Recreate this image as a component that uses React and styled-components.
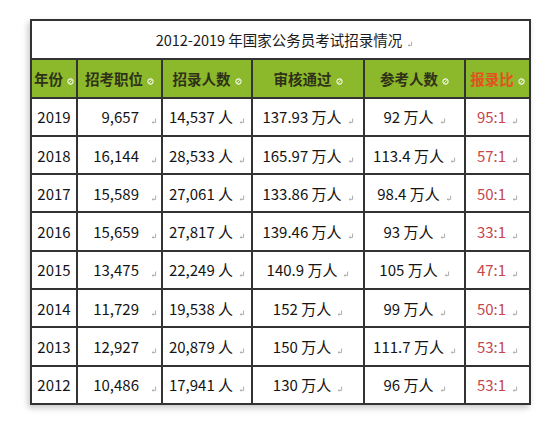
import React from "react";
import styled, { createGlobalStyle } from "styled-components";

const GlobalStyle = createGlobalStyle`
  html, body {
    margin: 0;
    padding: 0;
    background: #ffffff;
  }
  body {
    font-family: "Noto Sans CJK SC", "Noto Sans", sans-serif;
  }
`;

const Page = styled.div`
  width: 550px;
  height: 423px;
  padding: 19px 0 0 30px;
  box-sizing: border-box;
`;

const Table = styled.table`
  width: 499px;
  height: 386px;
  table-layout: fixed;
  border-collapse: collapse;
  background: #fff;
  box-shadow: -2px 3px 6px rgba(0, 0, 0, 0.22);
  font-size: 15px;
  color: #141414;
`;

const TitleCell = styled.td`
  height: 37px;
  border: 2px solid #333;
  text-align: center;
  font-size: 14.5px;
  color: #1a1a1a;
  padding: 0 0 0 8px;
`;

const HeadRow = styled.tr`
  background: #8cb82b;
`;

const HeadCell = styled.th`
  height: 36px;
  border: 2px solid #333;
  padding: 0;
  font-size: 14.5px;
  font-weight: 700;
  color: ${(p) => (p.$hot ? "#e4501e" : "#2f3118")};
  text-align: center;
  white-space: nowrap;
`;

const Cell = styled.td`
  height: 36px;
  border: 2px solid #333;
  padding: 0 ${(p) => (p.$right ? "4px" : "0")} 0 0;
  text-align: ${(p) => (p.$right ? "right" : "center")};
  color: ${(p) => (p.$ratio ? "#c5464c" : "#141414")};
  white-space: nowrap;
`;

const Mark = styled.svg`
  width: 6px;
  height: 6px;
  margin-left: ${(p) => p.$gap || 6}px;
  vertical-align: -1px;
`;

const ReturnMark = ({ gap }) => (
  <Mark $gap={gap} viewBox="0 0 6 6">
    <path d="M4.6 0.6 V4.4 H1.2 M2.4 3.3 L1.2 4.4 L2.4 5.4" fill="none" stroke="#a4a4a4" strokeWidth="0.9" />
  </Mark>
);

const CellMark = styled.svg`
  width: 7px;
  height: 7px;
  margin-left: 4px;
  vertical-align: 0;
`;

const HeadMark = () => (
  <CellMark viewBox="0 0 8 8">
    <circle cx="4" cy="4" r="3" fill="none" stroke="#f4f8ea" strokeWidth="1.2" />
    <path d="M2.6 5.4 L5.4 2.6" stroke="#f4f8ea" strokeWidth="1.1" />
  </CellMark>
);

const cols = [46, 85, 90, 112, 101, 65];

const rows = [
  ["2019", "9,657", "14,537 人", "137.93 万人", "92 万人", "95:1"],
  ["2018", "16,144", "28,533 人", "165.97 万人", "113.4 万人", "57:1"],
  ["2017", "15,589", "27,061 人", "133.86 万人", "98.4 万人", "50:1"],
  ["2016", "15,659", "27,817 人", "139.46 万人", "93 万人", "33:1"],
  ["2015", "13,475", "22,249 人", "140.9 万人", "105 万人", "47:1"],
  ["2014", "11,729", "19,538 人", "152 万人", "99 万人", "50:1"],
  ["2013", "12,927", "20,879 人", "150 万人", "111.7 万人", "53:1"],
  ["2012", "10,486", "17,941 人", "130 万人", "96 万人", "53:1"],
];

const heads = ["年份", "招考职位", "招录人数", "审核通过", "参考人数", "报录比"];

export default function App() {
  return (
    <Page>
      <GlobalStyle />
      <Table>
        <colgroup>
          {cols.map((w, i) => (
            <col key={i} style={{ width: w }} />
          ))}
        </colgroup>
        <tbody>
          <tr>
            <TitleCell colSpan={6}>
              2012-2019 年国家公务员考试招录情况
              <ReturnMark gap={5} />
            </TitleCell>
          </tr>
          <HeadRow>
            {heads.map((h, i) => (
              <HeadCell key={h} $hot={i === 5}>
                {h}
                <HeadMark />
              </HeadCell>
            ))}
          </HeadRow>
          {rows.map((r) => (
            <tr key={r[0]}>
              <Cell>{r[0]}</Cell>
              <Cell $right>
                {r[1]}
                <ReturnMark gap={12} />
              </Cell>
              <Cell>
                {r[2]}
                <ReturnMark />
              </Cell>
              <Cell>
                {r[3]}
                <ReturnMark />
              </Cell>
              <Cell>
                {r[4]}
                <ReturnMark />
              </Cell>
              <Cell $ratio>
                {r[5]}
                <ReturnMark />
              </Cell>
            </tr>
          ))}
        </tbody>
      </Table>
    </Page>
  );
}
